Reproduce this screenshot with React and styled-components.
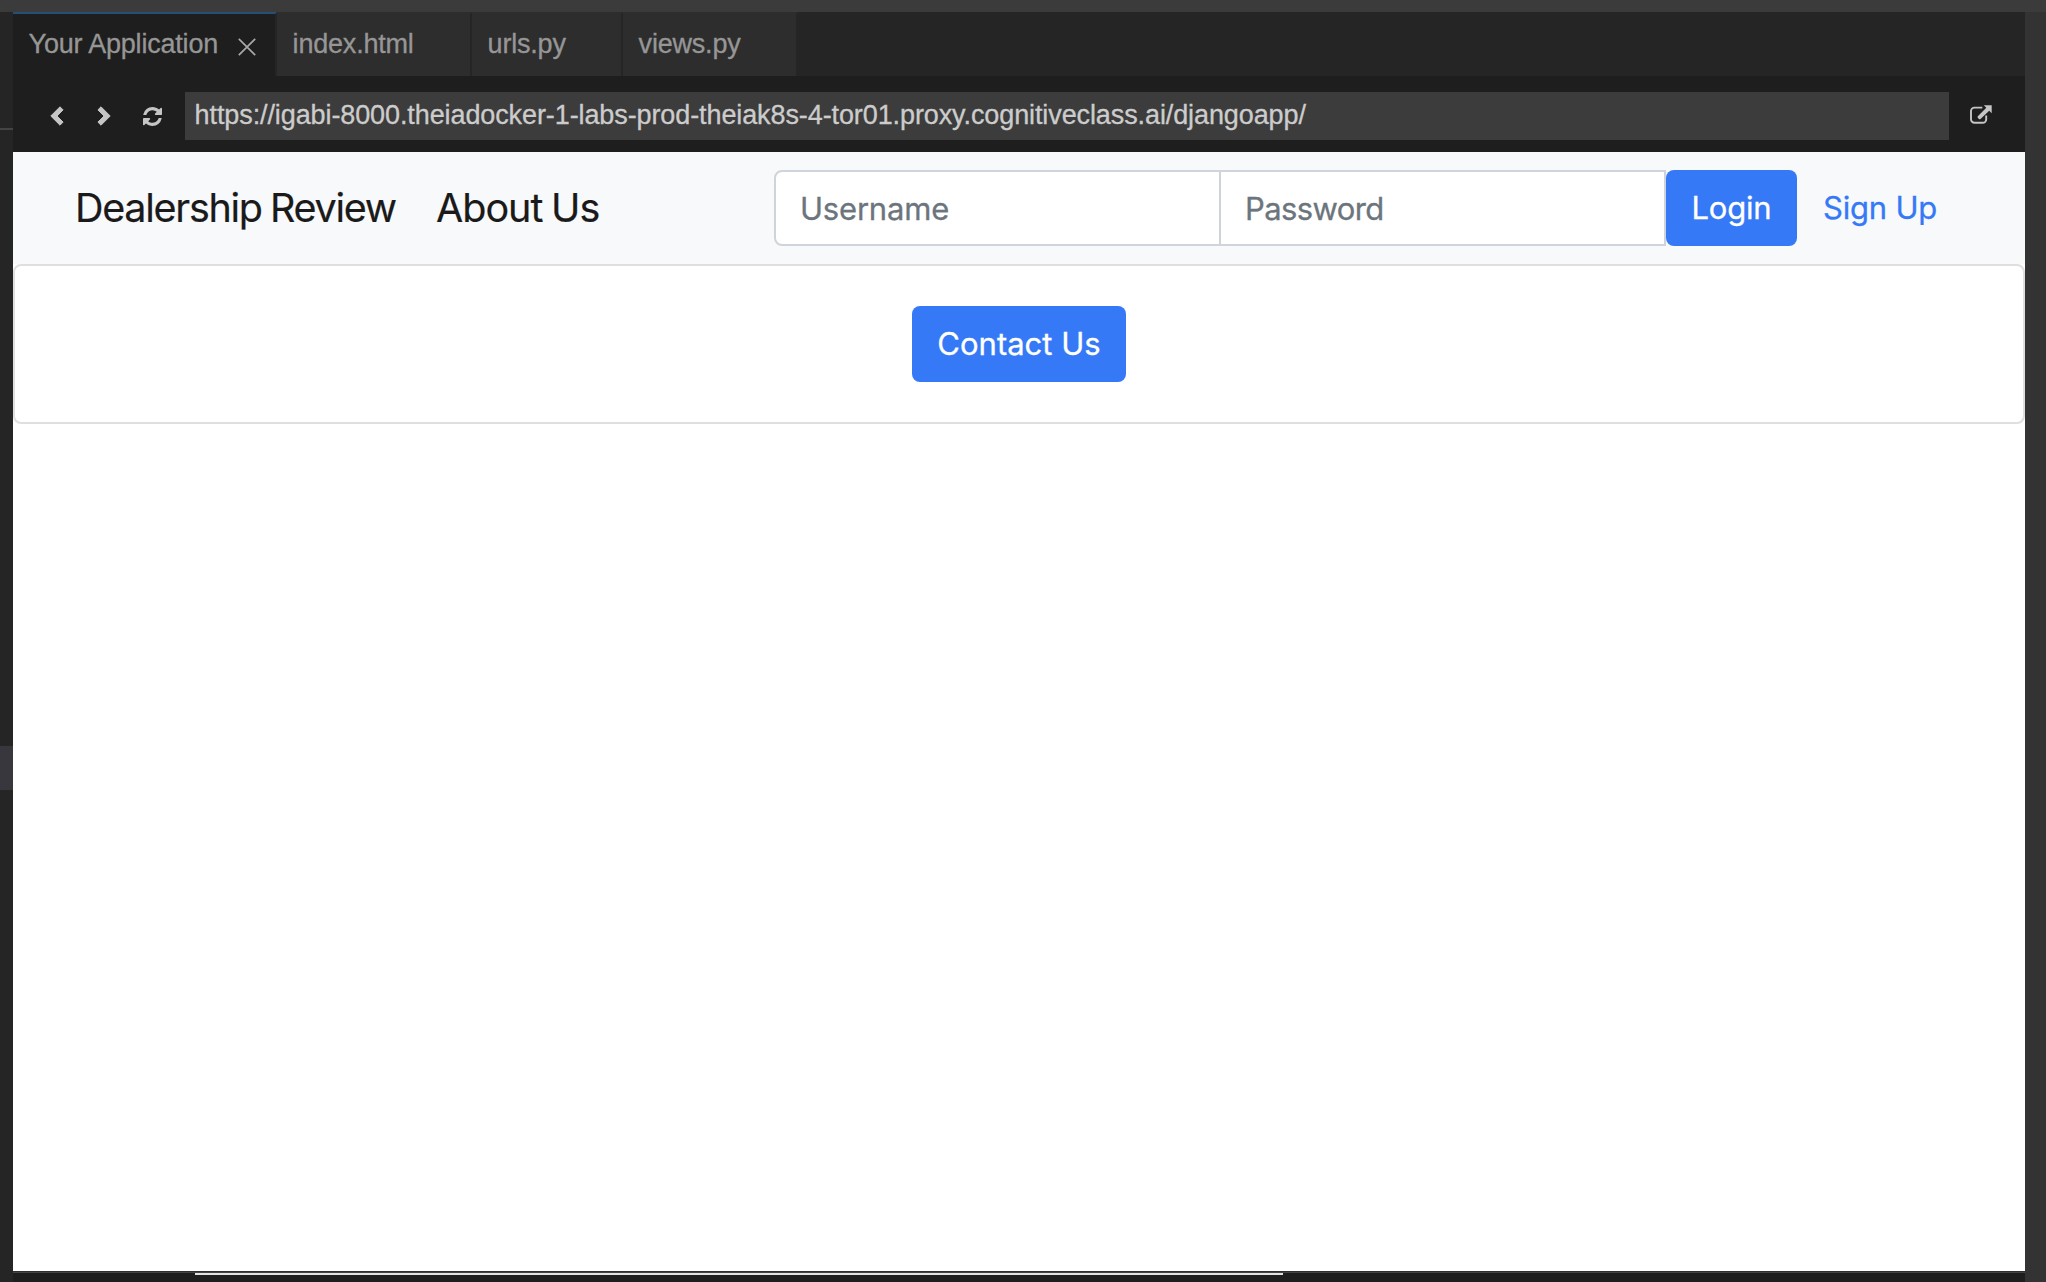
import React from "react";
import styled, { createGlobalStyle } from "styled-components";

const GlobalStyle = createGlobalStyle`
  * { box-sizing: border-box; }
  html, body { margin: 0; padding: 0; overflow: hidden; background: #1e1e1e; }
`;

const Window = styled.div`
  display: grid;
  grid-template: 12px 1fr / 13px 2012px 21px;
  width: 2046px;
  height: 1282px;
  overflow: hidden;
  background: #1e1e1e;
  font-family: "Liberation Sans", Arial, sans-serif;
`;

const TitleStrip = styled.div`
  grid-column: 1 / -1;
  background: #3b3b3b;
`;

const SidePanel = styled.div`
  display: flex;
  flex-direction: column;
  background: #252526;
`;

const SideDivider = styled.div`
  height: 2px;
  margin-top: 116px;
  background: #444445;
`;

const SideSelection = styled.div`
  height: 44px;
  margin-top: 616px;
  background: #37373d;
`;

const RightGutter = styled.div`
  background: #333333;
`;

const Editor = styled.main`
  display: flex;
  flex-direction: column;
  min-width: 0;
`;

const TabBar = styled.div`
  display: flex;
  height: 64px;
  background: #252526;
`;

const Tab = styled.div`
  display: flex;
  align-items: center;
  width: ${(p) => p.$width}px;
  height: 64px;
  padding: 0 16px 2px 15.6px;
  border-top: 2px solid ${(p) => (p.$active ? "#264f78" : "#2d2d2d")};
  border-right: 2px solid #252526;
  background: ${(p) => (p.$active ? "#1e1e1e" : "#2d2d2d")};
  color: #969696;
  font-size: 27px;
  letter-spacing: -0.2px;
  -webkit-text-stroke: 0.3px currentColor;
  white-space: nowrap;
`;

const CloseIcon = styled.svg`
  width: 18px;
  height: 18px;
  margin: 5px 3px 0 auto;
`;

const Toolbar = styled.div`
  display: flex;
  align-items: center;
  height: 76px;
  padding: 4px 0 0;
  background: #1e1e1e;
  color: #cccccc;
`;

const NavButton = styled.button`
  display: flex;
  align-items: center;
  justify-content: center;
  width: ${(p) => p.$width}px;
  height: 48px;
  padding: 0 0 ${(p) => p.$lift || 0}px;
  border: 0;
  background: transparent;
  color: #c5c5c5;
`;

const NavGroup = styled.div`
  display: flex;
  width: 172px;
  padding-left: 21px;
`;

const Address = styled.div`
  width: 1764px;
  height: 48px;
  padding-left: 9.6px;
  background: #3c3c3c;
  color: #cccccc;
  font-size: 27px;
  line-height: 46px;
  letter-spacing: -0.1px;
  -webkit-text-stroke: 0.3px currentColor;
  white-space: nowrap;
`;

const Page = styled.div`
  height: 1119px;
  background: #ffffff;
  font-family: Inter, sans-serif;
`;

const Navbar = styled.nav`
  display: flex;
  align-items: center;
  height: 112px;
  padding-left: 62px;
  background: #f8f9fb;
`;

const NavLink = styled.a`
  width: ${(p) => p.$width}px;
  color: #1a1a1a;
  font-size: 39.5px;
  letter-spacing: ${(p) => p.$spacing}px;
  word-spacing: -1.5px;
  line-height: 60px;
  -webkit-text-stroke: 0.2px currentColor;
  white-space: nowrap;
`;

const LoginForm = styled.form`
  display: flex;
`;

const Field = styled.input`
  width: ${(p) => p.$width}px;
  height: 76px;
  margin: 0;
  padding: 0 24px;
  border: 2px solid #ced4da;
  border-left-width: ${(p) => (p.$joined ? 0 : 2)}px;
  border-radius: ${(p) => (p.$joined ? "0" : "8px 0 0 8px")};
  background: #ffffff;
  font: 31px Inter, sans-serif;
  letter-spacing: ${(p) => (p.$joined ? -0.6 : -0.2)}px;
  &::placeholder {
    color: #6c757d;
    opacity: 1;
    -webkit-text-stroke: 0.3px currentColor;
  }
`;

const Button = styled.button`
  width: ${(p) => p.$width}px;
  height: 76px;
  padding: 0;
  border: 0;
  border-radius: 8px;
  background: ${(p) => (p.$link ? "transparent" : "#3579f6")};
  color: ${(p) => (p.$link ? "#3579f6" : "#ffffff")};
  font: 31px/76px Inter, sans-serif;
  letter-spacing: ${(p) => p.$spacing || -0.2}px;
  -webkit-text-stroke: 0.3px currentColor;
  white-space: nowrap;
`;

const Card = styled.section`
  display: flex;
  align-items: center;
  justify-content: center;
  height: 160px;
  border: 2px solid #dfdfdf;
  border-radius: 8px;
`;

const StatusEdge = styled.div`
  height: 2px;
  border-top: 1px solid #2f2f30;
  background: #444444;
`;

const ScrollLine = styled.div`
  width: 1088px;
  height: 2px;
  margin-left: 182px;
  background: #e2e2e2;
`;

function Chevron({ right }) {
  return (
    <svg width="14" height="20" viewBox="0 0 14 20" fill="currentColor" stroke="currentColor" strokeWidth="1" strokeLinejoin="round">
      <path
        d={right ? "M13.200 10L4 .8.900 3.900 7 10 .9 16.100 4 19.200z" : "M.8 10L10 .8l3.100 3.100L7 10l6.100 6.100-3.100 3.100z"}
      />
    </svg>
  );
}

function Refresh() {
  return (
    <svg width="19" height="19" viewBox="0 0 1536 1536" fill="currentColor">
      <path d="M1511 928q0 5-1 7-64 268-268 434.500T764 1536q-146 0-282.500-55T238 1324l-129 129q-19 19-45 19t-45-19-19-45V960q0-26 19-45t45-19h448q26 0 45 19t19 45-19 45l-137 137q71 66 161 102t187 36q134 0 250-65t186-179q11-17 53-117 8-23 30-23h192q13 0 22.500 9.500t9.500 22.500zm25-800v448q0 26-19 45t-45 19h-448q-26 0-45-19t-19-45 19-45l138-138Q969 256 768 256q-134 0-250 65T332 500q-11 17-53 117-8 23-30 23H50q-13 0-22.500-9.500T18 608v-7q65-268 270-434.500T768 0q146 0 284 55.500T1297 212l130-129q19-19 45-19t45 19 19 45z" />
    </svg>
  );
}

function External() {
  return (
    <svg width="22" height="19" viewBox="0 0 22 19" fill="none">
      <path d="M12.300 2.600H4.500A3.500 3.500 0 0 0 1 6.100v8.200a3.500 3.500 0 0 0 3.500 3.500h8.200a3.500 3.500 0 0 0 3.500-3.500V10.600" stroke="currentColor" strokeWidth="1.900" />
      <path d="M13.800 .2h7.900v8l-2.500-2.500-8.700 8.200a1.300 1.300 0 0 1-1.600 0l-1.100-1.100a1.300 1.300 0 0 1 0-1.600l8.500-8.500z" fill="currentColor" />
    </svg>
  );
}

export default function App() {
  return (
    <>
      <GlobalStyle />
      <Window>
        <TitleStrip />
        <SidePanel>
          <SideDivider />
          <SideSelection />
        </SidePanel>
        <Editor>
          <TabBar>
            <Tab $active $width={264}>
              <span>Your Application</span>
              <CloseIcon viewBox="0 0 18 18">
                <path d="M.8.800l16.400 16.400M17.200.800L.8 17.200" stroke="#a8a8a8" strokeWidth="1.700" />
              </CloseIcon>
            </Tab>
            <Tab $width={195}>index.html</Tab>
            <Tab $width={151}>urls.py</Tab>
            <Tab $width={175}>views.py</Tab>
          </TabBar>
          <Toolbar>
            <NavGroup>
              <NavButton $width={46} $lift={1}><Chevron /></NavButton>
              <NavButton $width={48} $lift={1}><Chevron right /></NavButton>
              <NavButton $width={49}><Refresh /></NavButton>
            </NavGroup>
            <Address>https://igabi-8000.theiadocker-1-labs-prod-theiak8s-4-tor01.proxy.cognitiveclass.ai/djangoapp/</Address>
            <NavButton $width={64} $lift={3}><External /></NavButton>
          </Toolbar>
          <Page>
            <Navbar>
              <NavLink $width={361} $spacing={-1.28}>Dealership Review</NavLink>
              <NavLink $width={338} $spacing={-1}>About Us</NavLink>
              <LoginForm>
                <Field $width={447} placeholder="Username" />
                <Field $joined $width={445} placeholder="Password" />
                <Button type="button" $width={131}>Login</Button>
                <Button type="button" $link $width={166}>Sign Up</Button>
              </LoginForm>
            </Navbar>
            <Card>
              <Button type="button" $width={214} $spacing={0.01}>Contact Us</Button>
            </Card>
          </Page>
          <StatusEdge />
          <ScrollLine />
        </Editor>
        <RightGutter />
      </Window>
    </>
  );
}
